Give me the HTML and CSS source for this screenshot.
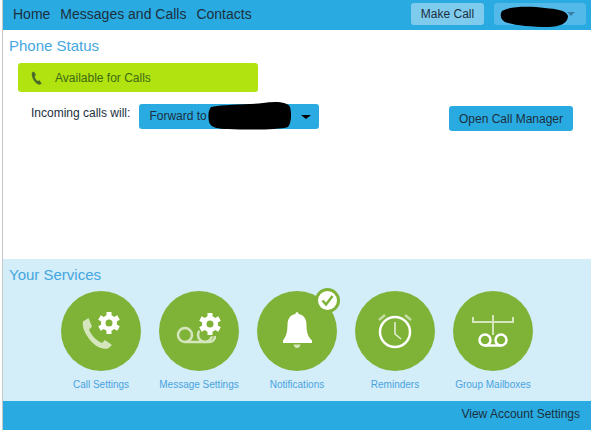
FILE: index.html
```html
<!DOCTYPE html>
<html lang="en">
<head>
  <meta charset="UTF-8" />
  <title>Phone Status</title>
  <link rel="stylesheet" href="styles.css">
</head>
<body>
  <div class="app">
    <!-- Top navigation -->
    <div class="topbar">
      <div class="nav">
        <a>Home</a>
        <a>Messages and Calls</a>
        <a>Contacts</a>
      </div>
      <div class="top-actions">
        <button class="make-call">Make Call</button>
        <div class="account">
          <svg class="blob blob-account" viewBox="0 0 68 21"><path d="M2 5C10 0 30 0 45 2C56 3 66 4 68 10C68 17 60 21 48 21C30 21 12 19 5 16C0 13 0 8 2 5Z"/></svg>
          <span class="caret caret-account"></span>
        </div>
      </div>
    </div>

    <!-- Phone status -->
    <div class="status">
      <h2>Phone Status</h2>
      <div class="available">
        <svg class="available-icon" viewBox="0 0 12 14"><path d="M1 1.6L3 .5L5 4L3.7 5.2C4 7 5.2 9 6.6 10L8.3 9.3L10.8 12.4L9 13.6C7 14 4.5 12 2.8 9.5C1 6.7 .3 3.5 1 1.6Z"/></svg>
        <span>Available for Calls</span>
      </div>
      <div class="forward-row">
        <div class="forward-left">
          <span class="incoming">Incoming calls will:</span>
          <div class="forward-select">
            <span>Forward to</span>
            <svg class="blob blob-forward" viewBox="0 0 83 28"><path d="M3 5C16 2 40 3 55 1C68 -1 80 0 82 5C84 12 83 22 80 25C70 28 40 28 20 27C10 27 3 26 1 20C0 14 0 9 3 5Z"/></svg>
            <span class="caret"></span>
          </div>
        </div>
        <button class="call-manager">Open Call Manager</button>
      </div>
    </div>

    <!-- Services -->
    <div class="services">
      <h2>Your Services</h2>
      <div class="service-list">
        <div class="service">
          <div class="circle">
            <svg viewBox="0 0 80 80">
              <defs>
                <g id="gear">
                  <circle r="8"/>
                  <path id="teeth" d="M-2.5-11H2.5V-6H-2.5ZM-2.5 6H2.5V11H-2.5Z"/>
                  <use href="#teeth" transform="rotate(60)"/>
                  <use href="#teeth" transform="rotate(120)"/>
                  <circle class="gear-hole" r="3.5"/>
                </g>
              </defs>
              <path class="pale-fill" d="M22 30.5L27.5 27L31 35.5L28 38.5C30 44 35 49.5 41 52L44 49L51 54L47 57.5C40 59.5 31 53 26.5 45.5C23 40 21 35 22 30.5Z"/>
              <use class="gear" href="#gear" transform="translate(48 32)"/>
            </svg>
          </div>
          <span class="service-name">Call Settings</span>
        </div>
        <div class="service">
          <div class="circle">
            <svg viewBox="0 0 80 80">
              <circle class="pale-line" cx="26" cy="44" r="7"/>
              <circle class="pale-line" cx="46" cy="44" r="7"/>
              <path class="pale-line" d="M26 51H50C54 51 56 48 56 45"/>
              <circle class="gear-ring" cx="51" cy="33" r="12.5"/>
              <use class="gear" href="#gear" transform="translate(51 33)"/>
            </svg>
          </div>
          <span class="service-name">Message Settings</span>
        </div>
        <div class="service">
          <div class="circle">
            <svg viewBox="0 0 80 80">
              <path class="white-fill" d="M38.5 23C38 20.5 42 20.5 41.5 23C47 24 49.5 28 49.5 34C49.5 41 51 46 55 49.5V52H26V49.5C29 46 30.5 41 30.5 34C30.5 28 33 24 38.5 23Z"/>
              <path class="pale-fill" d="M36.5 53.5H43.5C43 56 41.5 57 40 57C38.5 57 37 56 36.5 53.5Z"/>
            </svg>
          </div>
          <div class="badge">
            <svg viewBox="0 0 19 19"><path d="M4.5 9.5L8 13.5L14.5 5"/></svg>
          </div>
          <span class="service-name">Notifications</span>
        </div>
        <div class="service">
          <div class="circle">
            <svg viewBox="0 0 80 80">
              <circle class="white-line" cx="40" cy="41" r="15"/>
              <path class="white-thin" d="M40 31V43L46 48"/>
              <path class="pale-thick" d="M24 29L30 24M50 24L56 29"/>
            </svg>
          </div>
          <span class="service-name">Reminders</span>
        </div>
        <div class="service">
          <div class="circle">
            <svg viewBox="0 0 80 80">
              <path class="pale-thin" d="M20 26V31H60V26M40 24V44"/>
              <circle class="white-line" cx="32" cy="49" r="5.5"/>
              <circle class="white-line" cx="48" cy="49" r="5.5"/>
              <path class="white-line" d="M32 54.5H48"/>
            </svg>
          </div>
          <span class="service-name">Group Mailboxes</span>
        </div>
      </div>
    </div>

    <div class="footer">View Account Settings</div>
  </div>
</body>
</html>
```

FILE: styles.css
```css
html, body {
  margin: 0;
  padding: 0;
  background: #fff;
}

body {
  font-family: "Liberation Sans", Arial, sans-serif;
  color: #1c2f3d;
}

button {
  font-family: inherit;
  color: inherit;
  border: none;
  cursor: pointer;
}

h2 {
  margin: 0;
  font-size: 15px;
  font-weight: normal;
  line-height: 18px;
  color: #45a7e0;
}

.app {
  display: flex;
  flex-direction: column;
  height: 430px;
  margin-left: 2px;
  border-left: 1px solid #c8c8c8;
  overflow: hidden;
}

/* top bar */
.topbar {
  display: flex;
  justify-content: space-between;
  height: 30px;
  flex: none;
  background: #29abe2;
}

.nav {
  display: flex;
  gap: 10px;
  padding-left: 10px;
  font-size: 14px;
  line-height: 29px;
}

.top-actions {
  display: flex;
  gap: 10px;
  padding: 3px 5px 0 0;
}

.make-call {
  width: 73px;
  height: 22px;
  padding: 0;
  font-size: 12px;
  background: #7fcbee;
  border-radius: 3px;
}

.account {
  position: relative;
  width: 92px;
  height: 22px;
  background: #52b9e8;
  border-radius: 3px;
}

.blob {
  position: absolute;
  fill: #000;
}

.blob-account {
  left: 6px;
  top: 3px;
  width: 68px;
  height: 21px;
}

.caret {
  position: absolute;
  right: 8px;
  top: 11px;
  border-left: 5px solid transparent;
  border-right: 5px solid transparent;
  border-top: 4px solid #000;
}

.caret-account {
  right: 11px;
  top: 9px;
  border-left-width: 4px;
  border-right-width: 4px;
  border-top-color: #3c7fa6;
}

/* phone status */
.status {
  flex: 1;
  padding: 7px 18px 0 6px;
}

.available {
  display: flex;
  align-items: center;
  gap: 12px;
  width: 240px;
  height: 29px;
  margin: 8px 0 0 9px;
  padding-left: 13px;
  box-sizing: border-box;
  font-size: 12px;
  color: #3d6a12;
  background: #b1e310;
  border-radius: 3px;
}

.available-icon {
  width: 12px;
  height: 14px;
  fill: #4a6b2a;
}

.forward-row {
  display: flex;
  justify-content: space-between;
  align-items: flex-start;
  margin-top: 12px;
}

.forward-left {
  display: flex;
  gap: 9px;
  padding-left: 22px;
}

.incoming {
  font-size: 12px;
  line-height: 18px;
}

.forward-select {
  position: relative;
  width: 180px;
  height: 25px;
  padding-left: 10px;
  box-sizing: border-box;
  font-size: 12px;
  line-height: 24px;
  background: #29abe2;
  border-radius: 3px;
}

.blob-forward {
  left: 69px;
  top: -2px;
  width: 83px;
  height: 28px;
}

.call-manager {
  width: 124px;
  height: 25px;
  margin-top: 2px;
  padding: 0;
  font-size: 12px;
  background: #29abe2;
  border-radius: 3px;
}

/* services */
.services {
  flex: none;
  height: 142px;
  padding: 7px 6px 0;
  box-sizing: border-box;
  background: #d3edf9;
}

.service-list {
  display: flex;
  justify-content: center;
  gap: 18px;
  margin-top: 7px;
}

.service {
  position: relative;
  width: 80px;
  display: flex;
  flex-direction: column;
  align-items: center;
}

.circle {
  width: 80px;
  height: 80px;
  border-radius: 50%;
  background: #7eb338;
}

.circle svg {
  display: block;
  width: 80px;
  height: 80px;
}

.service-name {
  margin-top: 8px;
  font-size: 10px;
  line-height: 12px;
  color: #4aa3df;
  white-space: nowrap;
}

.badge {
  position: absolute;
  right: -3px;
  top: -3px;
  width: 25px;
  height: 25px;
  box-sizing: border-box;
  background: #fff;
  border: 3px solid #7eb338;
  border-radius: 50%;
}

.badge svg {
  display: block;
  width: 19px;
  height: 19px;
  fill: none;
  stroke: #7eb338;
  stroke-width: 2.5;
}

/* icon parts */
.white-fill { fill: #fff; }
.pale-fill { fill: #d5e6bd; }
.white-line { fill: none; stroke: #fff; stroke-width: 2.5; }
.white-thin { fill: none; stroke: #e8f2da; stroke-width: 1.5; }
.pale-line { fill: none; stroke: #d5e6bd; stroke-width: 2.5; }
.pale-thin { fill: none; stroke: #d5e6bd; stroke-width: 2; }
.pale-thick { fill: none; stroke: #c6dca4; stroke-width: 2.5; }
.gear { fill: #fff; }
.gear-hole { fill: #7eb338; }
.gear-ring { fill: #7eb338; }

.footer {
  flex: none;
  height: 29px;
  padding-right: 11px;
  font-size: 12px;
  line-height: 27px;
  text-align: right;
  background: #29abe2;
}
```
